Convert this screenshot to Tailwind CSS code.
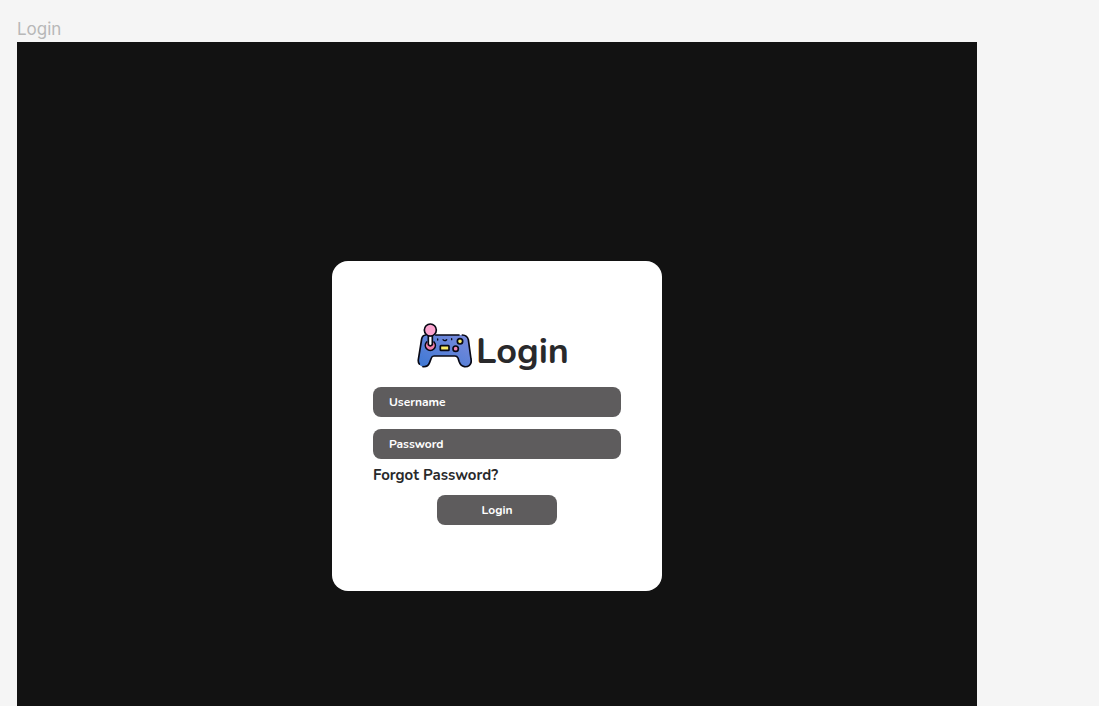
<!DOCTYPE html>
<html lang="en">
<head>
<meta charset="utf-8">
<meta name="viewport" content="width=device-width, initial-scale=1">
<title>Login</title>
<script src="https://cdn.jsdelivr.net/npm/@tailwindcss/browser@4"></script>
</head>
<body class="flex h-screen flex-col overflow-hidden bg-[#f5f5f5] pl-[17px] pr-[122px] pt-4 font-['Nunito','Lato',sans-serif]">
  <p class="h-[26px] shrink-0 font-['Inter',sans-serif] text-[17px] leading-[26px] text-[#b8b8b8]">Login</p>
  <main class="flex flex-1 justify-center bg-[#121212] pt-[219px]">
    <form class="flex w-[330px] flex-col self-start rounded-2xl bg-white px-[41px] pt-[62px] pb-[66px]">
      <div class="flex h-[45px] items-center justify-center gap-1 pr-2">
        <svg class="h-[45px] w-[55px] shrink-0" viewBox="22 25 165 135" fill="none" stroke="#080814" stroke-width="5" stroke-linecap="round" stroke-linejoin="round" aria-hidden="true">
          <defs>
            <linearGradient id="shell" x1="0" y1="1" x2="1" y2="0">
              <stop offset="0" stop-color="#3d78d4"/>
              <stop offset="1" stop-color="#7c8bdc"/>
            </linearGradient>
          </defs>
          <path d="M46 61H160Q173 62 176 75L184 133C188 152 174 157 164 156C155 155 151 149 148 140L145 130Q142 124 136 124H73Q67 124 65 130L60 143C56 154 49 157 40 156C29 154 24 147 26 135L36 73Q38 62 46 61Z" fill="url(#shell)" stroke="none"/>
          <path d="M78 61H148M158 61Q173 62 176 75L184 133C188 152 174 157 164 156C155 155 151 149 148 140L145 130Q142 124 136 124H73Q67 124 65 130L60 143C56 154 49 157 40 156M29 148Q25 143 26 135L36 73Q38 62 48 61"/>
          <path d="M51 82A15 15 0 1 0 73 82" fill="#f17faa"/>
          <path d="M56 63V90Q62 97 68 90V63Z" fill="#fff"/>
          <circle cx="62" cy="46" r="18" fill="#fba4cf"/>
          <rect x="92" y="93" width="26" height="14" rx="2" fill="#fbed64"/>
          <circle cx="151" cy="80" r="8" fill="#fbed64"/>
          <circle cx="138" cy="102" r="8" fill="#ef86b3"/>
          <path d="M84 73V76M126 72V75M100 75Q105 81 111 75" stroke-width="4"/>
        </svg>
        <h1 class="pt-3 text-4xl leading-[46px] font-bold text-[#29292b]">Login</h1>
      </div>
      <div class="mt-[19px] flex flex-col gap-3">
        <input type="text" aria-label="Username" placeholder="Username" class="h-[30px] w-full rounded-lg bg-[#5e5c5d] px-4 text-xs font-bold text-white placeholder:text-white">
        <input type="password" aria-label="Password" placeholder="Password" class="h-[30px] w-full rounded-lg bg-[#5e5c5d] px-4 text-xs font-bold text-white placeholder:text-white">
      </div>
      <a href="#" class="mt-1 self-start text-[15px] leading-6 font-bold text-[#29292b]">Forgot Password?</a>
      <button type="submit" class="mt-2 h-[30px] w-[120px] self-center rounded-lg bg-[#5e5c5d] text-xs font-bold text-white">Login</button>
    </form>
  </main>
</body>
</html>
